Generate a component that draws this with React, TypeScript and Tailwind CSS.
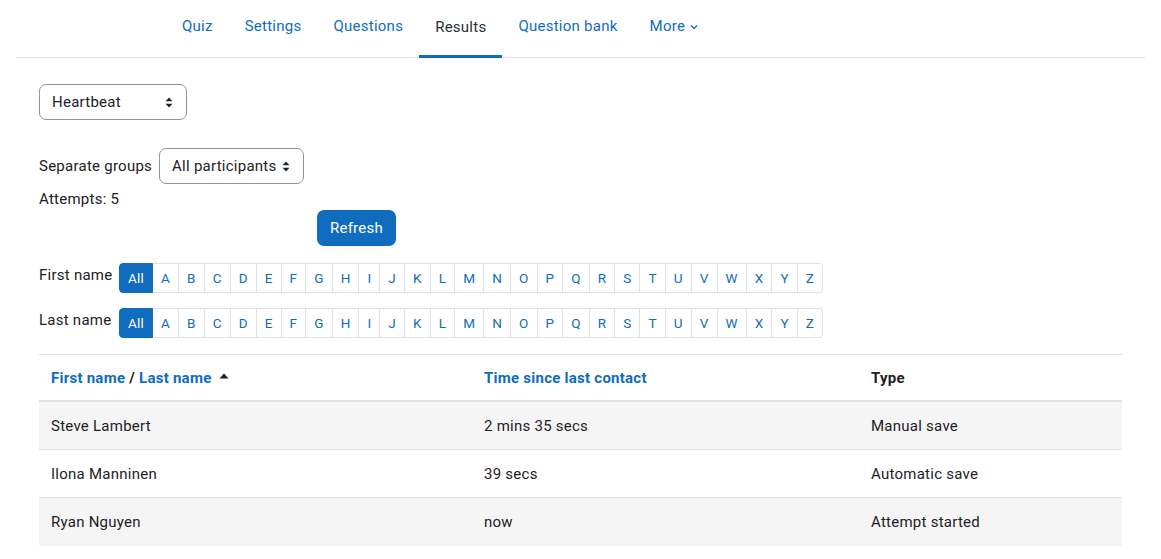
import React from "react";

const letters = "ABCDEFGHIJKLMNOPQRSTUVWXYZ".split("");

function UpDown() {
  return (
    <svg width="8" height="11" viewBox="0 0 8 11" className="shrink-0">
      <path d="M4 0.5 L7.5 4.3 L0.5 4.3 Z" fill="#1d2125" />
      <path d="M4 10.5 L7.5 6.7 L0.5 6.7 Z" fill="#1d2125" />
    </svg>
  );
}

function Select({ label, width }: { label: string; width: string }) {
  return (
    <div
      className={`${width} h-[36px] flex items-center justify-between pl-[12px] pr-[13px] border border-[#8f959e] rounded-[7px] bg-white text-[#1d2125]`}
    >
      <span>{label}</span>
      <UpDown />
    </div>
  );
}

function Initials({ label }: { label: string }) {
  return (
    <div className="flex items-start">
      <div className="w-[80px] mt-[1px] leading-[22px]">{label}</div>
      <div className="flex h-[30px] text-[13.5px] tracking-[0.2px]">
        <div className="h-full px-[8px] flex items-center bg-[#0f6cbf] text-white rounded-l-[4px] border border-[#0f6cbf]">
          All
        </div>
        {letters.map((l, i) => (
          <div
            key={l}
            className={`h-full px-[8px] flex items-center text-[#0f6cbf] border-y border-r border-[#dee2e6] ${
              i === letters.length - 1 ? "rounded-r-[4px]" : ""
            }`}
          >
            {l}
          </div>
        ))}
      </div>
    </div>
  );
}

const rows = [
  ["Steve Lambert", "2 mins 35 secs", "Manual save"],
  ["Ilona Manninen", "39 secs", "Automatic save"],
  ["Ryan Nguyen", "now", "Attempt started"],
];

export default function App() {
  const tabs = ["Quiz", "Settings", "Questions", "Results", "Question bank"];
  return (
    <div className="min-h-screen bg-white text-[15px] tracking-[0.25px] text-[#1d2125] font-['Roboto','Liberation_Sans',sans-serif]">
      <div className="mx-4 border-b border-[#dee2e6] flex pl-[150px] h-[58px]">
        {tabs.map((t) => (
          <div
            key={t}
            className={`px-4 flex items-center pb-[4px] ${
              t === "Results"
                ? "text-[#2b2f33] border-b-[3px] border-[#0f6cbf] pt-[3px] pb-[4px] mb-[-1px]"
                : "text-[#0f6cbf]"
            }`}
          >
            {t}
          </div>
        ))}
        <div className="px-4 flex items-center pb-[4px] text-[#0f6cbf] gap-[5px]">
          More
          <svg width="8" height="6" viewBox="0 0 8 6">
            <path d="M1 1.5 L4 4.5 L7 1.5" stroke="#0f6cbf" strokeWidth="1.3" fill="none" />
          </svg>
        </div>
      </div>

      <div className="px-[39px]">
        <div className="pt-[26px]">
          <Select label="Heartbeat" width="w-[148px]" />
        </div>
        <div className="mt-[28px] flex items-center gap-[7px]">
          <span>Separate groups</span>
          <Select label="All participants" width="w-[145px]" />
        </div>
        <div className="mt-[4px] leading-[22px]">Attempts: 5</div>
        <div className="ml-[278px] w-[79px] h-[36px] bg-[#0f6cbf] text-white rounded-[7px] flex items-center justify-center">
          Refresh
        </div>
        <div className="mt-[17px] flex flex-col gap-[15px]">
          <Initials label="First name" />
          <Initials label="Last name" />
        </div>

        <div className="mt-[16px] border-t border-[#dee2e6]">
          <div className="grid grid-cols-[433px_387px_1fr] h-[47px] pt-[2px] items-center border-b-2 border-[#dee2e6] font-bold">
            <div className="px-3 flex items-center">
              <span className="text-[#0f6cbf]">First name</span>
              <span className="mx-[4px]">/</span>
              <span className="text-[#0f6cbf]">Last name</span>
              <svg width="10" height="6" viewBox="0 0 10 6" className="ml-[7px] mb-[6px]">
                <path d="M5 0.5 L9.5 5.5 L0.5 5.5 Z" fill="#1d2125" />
              </svg>
            </div>
            <div className="px-3 text-[#0f6cbf]">Time since last contact</div>
            <div className="px-3">Type</div>
          </div>
          {rows.map((r, i) => (
            <div
              key={r[0]}
              className={`grid grid-cols-[433px_387px_1fr] items-center h-[48px] pt-[1px] ${
                i < rows.length - 1 ? "border-b border-[#dee2e6]" : ""
              } ${i % 2 === 0 ? "bg-[#f5f5f5]" : "bg-white"}`}
            >
              {r.map((c) => (
                <div key={c} className="px-3">
                  {c}
                </div>
              ))}
            </div>
          ))}
        </div>
      </div>
    </div>
  );
}
